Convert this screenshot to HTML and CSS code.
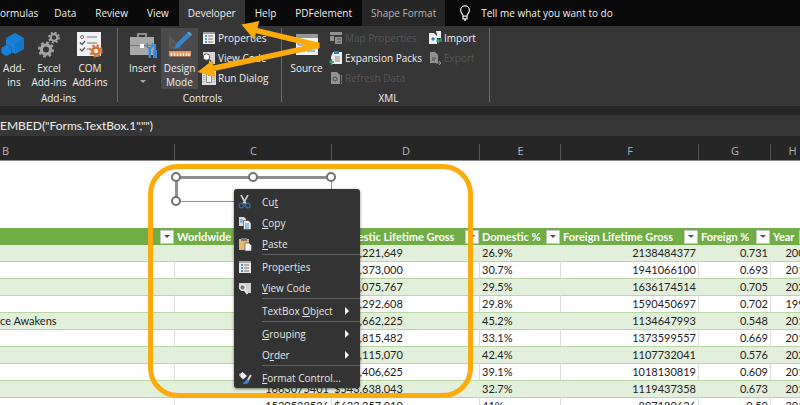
FILE: index.html
```html
<!DOCTYPE html>
<html lang="en">
  <head>
    <meta charset="UTF-8" />
    <meta name="viewport" content="width=device-width, initial-scale=1.0" />
    <title>Box office workbook</title>
    <link rel="stylesheet" href="styles.css">
  </head>
  <body>
    <!-- Ribbon tabs -->
    <nav class="tabs">
      <button class="tab tab-first">ormulas</button>
      <button class="tab">Data</button>
      <button class="tab">Review</button>
      <button class="tab">View</button>
      <button class="tab active">Developer</button>
      <button class="tab">Help</button>
      <button class="tab">PDFelement</button>
      <button class="tab context">Shape Format</button>
      <button class="tell-me">
        <svg width="12" height="16" viewBox="0 0 12 16" fill="none" stroke="#e8e8e8" stroke-width="1.3">
          <path d="M4 11.2C4 9 1.6 8.300 1.600 5.300a4.400 4.400 0 0 1 8.800 0C10.400 8.300 8 9 8 11.200zM4 11.200v2.600h4v-2.600M5 15h2" />
        </svg>
        Tell me what you want to do
      </button>
    </nav>

    <!-- Ribbon -->
    <div class="ribbon">
      <section class="group group-addins">
        <div class="group-tools">
          <button class="big">
            <svg width="26" height="26" viewBox="0 0 26 26">
              <path d="M14 1l9 5v11l-9 5-9-5V6z" fill="#1a7fd4" />
              <path d="M14 12l9-6v11l-9 5z" fill="#1276c9" />
              <path d="M5.500 13l5 2.700v5.600l-5 2.700-5-2.700v-5.600z" fill="#1683d8" stroke="#2b5f8e" stroke-width=".8" />
            </svg>
            <span>Add-<br>ins</span>
          </button>
          <button class="big">
            <svg width="26" height="26" viewBox="0 0 26 26" fill="none" stroke="#a3a3a3">
              <circle cx="10" cy="17.500" r="4.600" stroke-width="3.200" />
              <circle cx="10" cy="17.500" r="6.900" stroke-width="2.400" stroke-dasharray="2.700 2.720" />
              <circle cx="18" cy="5.500" r="3.300" stroke-width="2.200" />
              <circle cx="18" cy="5.500" r="5" stroke-width="1.800" stroke-dasharray="2 1.930" />
            </svg>
            <span>Excel<br>Add-ins</span>
          </button>
          <button class="big">
            <svg width="28" height="26" viewBox="0 0 28 26" fill="none">
              <path d="M1 0h24v24H1z" fill="#f1f1f1" />
              <circle cx="6" cy="5" r="1.500" stroke="#777" />
              <path d="M11 5h10M11 11h10M11 17h5" stroke="#777" />
              <path d="M4 10.500l2 2 3-3.500M4 17l2 2 3-3.500" stroke="#555" stroke-width="1.200" />
              <circle cx="20" cy="19" r="5.800" fill="#f1f1f1" />
              <circle cx="20" cy="19" r="3.500" stroke="#d8712c" stroke-width="2.600" />
              <circle cx="20" cy="19" r="5.600" stroke="#d8712c" stroke-width="2.200" stroke-dasharray="2.200 2.200" />
            </svg>
            <span>COM<br>Add-ins</span>
          </button>
        </div>
        <h2>Add-ins</h2>
      </section>

      <section class="group group-controls">
        <div class="group-tools">
          <button class="big">
            <svg width="28" height="26" viewBox="0 0 28 26">
              <path d="M9 6V2h8v4" fill="none" stroke="#a8a8a8" stroke-width="1.600" />
              <path d="M1 5h24v18H1z" fill="#a8a8a8" />
              <path d="M1 13.500h24" stroke="#777" />
              <path d="M11 12h4v4h-4z" fill="#fff" />
              <path d="M17.500 11v4.500l2 1.500v9h2.500v-9l2-1.500V11h-1.500v4h-3.500v-4zM25 12h2v6h1v8h-4v-8h1z" fill="#3b8ad8" />
            </svg>
            <span>Insert</span>
            <svg class="chevron" width="6" height="4" viewBox="0 0 6 4"><path d="M0 0h6L3 3z" fill="#aaa" /></svg>
          </button>
          <button class="big pressed">
            <svg width="26" height="26" viewBox="0 0 26 26">
              <path d="M2 3v14h13zM5 10l4 4H5z" fill="#5b5b5b" fill-rule="evenodd" />
              <path d="M7 17l2.500-5.500L20 1l3.500 3L13 14.500z" fill="#3583d3" />
              <path d="M20 1l1.500-1.500L25 2.500 23.500 4z" fill="#5ba5ea" />
              <path d="M2 19h22v5.500H2z" fill="#eb925e" />
              <path d="M4.500 21v3M7.500 21v3M10.500 21v3M13.500 21v3M16.500 21v3M19.500 21v3M22 21v3" stroke="#fff" stroke-width="1.300" />
            </svg>
            <span>Design<br>Mode</span>
          </button>
          <div class="small-list">
            <button class="small">
              <svg width="14" height="14" viewBox="0 0 14 14">
                <path d="M1 1h12v12H1z" fill="#f0f0f0" /><path d="M1 1h12v2H1z" fill="#9b9b9b" />
                <path d="M3 5h2M3 8h2M3 11h2" stroke="#2878c8" stroke-width="1.500" /><path d="M6 5h5M6 8h5M6 11h5" stroke="#777" />
              </svg>
              Properties
            </button>
            <button class="small">
              <svg width="14" height="14" viewBox="0 0 14 14">
                <path d="M1 1h12v12H7V8H1z" fill="#d5d5d5" />
                <circle cx="4.500" cy="6" r="3.200" fill="#fff" stroke="#555" /><path d="M7 8.500l4 4" stroke="#555" stroke-width="1.600" />
              </svg>
              View Code
            </button>
            <button class="small">
              <svg width="14" height="14" viewBox="0 0 14 14">
                <path d="M0 0h14v14H0z" fill="#dcdcdc" /><path d="M4.500 2.500h5v9h-5z" fill="#eee" stroke="#888" />
                <path d="M2 2v10M12 2v10" stroke="#888" stroke-dasharray="1 1" /><path d="M6 4h2" stroke="#444" />
              </svg>
              Run Dialog
            </button>
          </div>
        </div>
        <h2>Controls</h2>
      </section>

      <section class="group group-xml">
        <div class="group-tools">
          <button class="big">
            <svg width="24" height="26" viewBox="0 0 24 26">
              <path d="M1 2h22v21H1z" fill="#f2f2f2" /><path d="M1 2h22v4H1z" fill="#979797" />
              <path d="M3 9h7v4H3zM12 9v10h8M12 14h8" fill="none" stroke="#418ed6" />
            </svg>
            <span>Source</span>
          </button>
          <div class="small-list">
            <button class="small" disabled>
              <svg width="14" height="14" viewBox="0 0 14 14">
                <path d="M1 1h12v3H1zM1 5h4v5H1zM6 6h7v7H6z" fill="#929292" /><path d="M8 8h4M8 11h4" stroke="#4a4a4a" />
              </svg>
              Map Properties
            </button>
            <button class="small">
              <svg width="14" height="14" viewBox="0 0 14 14">
                <path d="M4 1h9v12H2V6z" fill="#eee" /><path d="M5 0v3h5V0" fill="#2b7cc9" />
                <path d="M6 6h5M6 8h5M6 10h5" stroke="#888" /><path d="M2.500 8v6M0 11h5" stroke="#2f9b68" stroke-width="1.600" />
              </svg>
              Expansion Packs
            </button>
            <button class="small" disabled>
              <svg width="14" height="14" viewBox="0 0 14 14">
                <path d="M2 1h6l3 3v9H2z" fill="#929292" /><circle cx="6" cy="8" r="2" fill="none" stroke="#4a4a4a" /><path d="M12.500 4v6M12.500 11v2" stroke="#777" />
              </svg>
              Refresh Data
            </button>
          </div>
          <div class="small-list">
            <button class="small">
              <svg width="14" height="14" viewBox="0 0 14 14">
                <path d="M1 2h5l3 3v8H1zM8 0h5v7H9V4z" fill="#eee" /><path d="M3 8l2-2 2 2-2 2z" fill="#2b7cc9" />
                <path d="M13 7v3H9M11 8l-2 2 2 2" fill="none" stroke="#34a06c" stroke-width="1.300" />
              </svg>
              Import
            </button>
            <button class="small" disabled>
              <svg width="14" height="14" viewBox="0 0 14 14">
                <path d="M2 1h5l3 3v8H2z" fill="#929292" /><path d="M4 7h4M4 9h3" stroke="#4a4a4a" /><path d="M8 12h5M11 10l2 2-2 2" fill="none" stroke="#929292" />
              </svg>
              Export
            </button>
          </div>
        </div>
        <h2>XML</h2>
      </section>
    </div>

    <!-- Formula bar -->
    <div class="formula-bar">
      <input type="text" aria-label="Formula" value='EMBED("Forms.TextBox.1","")' />
    </div>

    <!-- Worksheet -->
    <main class="sheet">
      <table class="grid">
        <colgroup>
          <col class="col-b"><col class="col-c"><col class="col-d"><col class="col-e"><col class="col-f"><col class="col-g"><col class="col-h">
        </colgroup>
        <thead>
          <tr class="letters">
            <th class="letter-b">B</th><th>C</th><th>D</th><th>E</th><th>F</th><th>G</th><th>H</th>
          </tr>
          <tr class="blank"><td colspan="7"></td></tr>
          <tr class="fields">
            <th><div class="field"><span></span><button class="filter" aria-label="Filter title"></button></div></th>
            <th><div class="field"><span>Worldwide</span></div></th>
            <th><div class="field"><span>Domestic Lifetime Gross</span><button class="filter" aria-label="Filter domestic gross"></button></div></th>
            <th><div class="field"><span>Domestic %</span><button class="filter" aria-label="Filter domestic percent"></button></div></th>
            <th><div class="field"><span>Foreign Lifetime Gross</span><button class="filter" aria-label="Filter foreign gross"></button></div></th>
            <th><div class="field"><span>Foreign %</span><button class="filter" aria-label="Filter foreign percent"></button></div></th>
            <th><div class="field"><span>Year</span><button class="filter" aria-label="Filter year"></button></div></th>
          </tr>
        </thead>
        <tbody>
          <tr><td></td><td class="num">2923706026</td><td>$785,221,649</td><td>26.9%</td><td class="num">2138484377</td><td class="num">0.731</td><td class="num">2009</td></tr>
          <tr><td></td><td class="num">2799439100</td><td>$858,373,000</td><td>30.7%</td><td class="num">1941066100</td><td class="num">0.693</td><td class="num">2019</td></tr>
          <tr><td></td><td class="num">2320250281</td><td>$684,075,767</td><td>29.5%</td><td class="num">1636174514</td><td class="num">0.705</td><td class="num">2022</td></tr>
          <tr><td></td><td class="num">2264743305</td><td>$674,292,608</td><td>29.8%</td><td class="num">1590450697</td><td class="num">0.702</td><td class="num">1997</td></tr>
          <tr><td class="title">ce Awakens</td><td class="num">2071310218</td><td>$936,662,225</td><td>45.2%</td><td class="num">1134647993</td><td class="num">0.548</td><td class="num">2015</td></tr>
          <tr><td></td><td class="num">2052415039</td><td>$678,815,482</td><td>33.1%</td><td class="num">1373599557</td><td class="num">0.669</td><td class="num">2018</td></tr>
          <tr><td></td><td class="num">1921847111</td><td>$814,115,070</td><td>42.4%</td><td class="num">1107732041</td><td class="num">0.576</td><td class="num">2021</td></tr>
          <tr><td></td><td class="num">1671537444</td><td>$653,406,625</td><td>39.1%</td><td class="num">1018130819</td><td class="num">0.609</td><td class="num">2015</td></tr>
          <tr><td></td><td class="num">1663075401</td><td>$543,638,043</td><td>32.7%</td><td class="num">1119437358</td><td class="num">0.673</td><td class="num">2019</td></tr>
          <tr><td></td><td class="num">1520538536</td><td>$623,357,910</td><td>41%</td><td class="num">897180626</td><td class="num">0.59</td><td class="num">2012</td></tr>
        </tbody>
      </table>

      <!-- Selected text box control -->
      <div class="textbox">
        <input type="text" aria-label="TextBox1" />
        <i class="handle top-left"></i>
        <i class="handle top-mid"></i>
        <i class="handle top-right"></i>
        <i class="handle bottom-left"></i>
      </div>

      <!-- Context menu -->
      <div class="menu">
        <button>
          <svg width="14" height="14" viewBox="0 0 14 14" fill="none">
            <path d="M3 0l5 9M10 0L5 9" stroke="#d0d0d0" stroke-width="1.600" /><circle cx="3.500" cy="10.500" r="2.300" stroke="#2c6aa5" stroke-width="1.400" /><circle cx="9.800" cy="10.500" r="2.300" stroke="#2c6aa5" stroke-width="1.400" />
          </svg>
          <span>Cu<u>t</u></span>
        </button>
        <button>
          <svg width="14" height="14" viewBox="0 0 14 14">
            <path d="M1 1h5l2 2v7H1z" fill="#dedede" /><path d="M5.500 4.500h5l2.500 2.500v6.500H5.500z" fill="#f2f2f2" stroke="#333" stroke-width=".6" />
            <path d="M2 4h3M2 6h3M7 8h4M7 10h4M7 12h4" stroke="#3f83c4" />
          </svg>
          <span><u>C</u>opy</span>
        </button>
        <button>
          <svg width="14" height="14" viewBox="0 0 14 14">
            <path d="M1 2h10v11H1z" fill="#e5b877" /><path d="M3 1h6v3H3z" fill="#777" /><path d="M7 6h4l2.500 2.500V14H7z" fill="#f4f4f4" stroke="#444" stroke-width=".6" />
          </svg>
          <span><u>P</u>aste</span>
        </button>
        <hr>
        <button>
          <svg width="14" height="14" viewBox="0 0 14 14">
            <path d="M1 1h12v12H1z" fill="#e8e8e8" /><path d="M1 1h12v2H1z" fill="#aaa" />
            <path d="M3 5h2M3 8h2M3 11h2" stroke="#2878c8" stroke-width="1.300" /><path d="M6 5h5M6 8h5M6 11h5" stroke="#777" />
          </svg>
          <span>Propert<u>i</u>es</span>
        </button>
        <button>
          <svg width="14" height="14" viewBox="0 0 14 14">
            <path d="M1 2h12v10H8L5 8H1z" fill="#cfcfcf" /><circle cx="4.500" cy="6.500" r="2.800" fill="#777" stroke="#f0f0f0" stroke-width="1.300" /><path d="M6.500 9l3 4" stroke="#f0f0f0" stroke-width="1.600" />
          </svg>
          <span><u>V</u>iew Code</span>
        </button>
        <hr>
        <button class="submenu"><span>TextBox <u>O</u>bject</span></button>
        <hr>
        <button class="submenu"><span><u>G</u>rouping</span></button>
        <button class="submenu"><span>O<u>r</u>der</span></button>
        <hr>
        <button>
          <svg width="14" height="14" viewBox="0 0 14 14">
            <path d="M1 4l3.500-3L9 5 5 8.500z" fill="#eee" /><path d="M2 2v3" stroke="#999" /><path d="M13 4L9.500 9.500" stroke="#d5d5d5" stroke-width="2" /><path d="M9.500 8.500c-2 0-2 3-5 3.500 2 2 6.500 1 6.500-2z" fill="#3a86d0" />
          </svg>
          <span><u>F</u>ormat Control...</span>
        </button>
      </div>
      <div class="callout"></div>
    </main>

    <!-- Arrows pointing at the Developer tab and Design Mode -->
    <svg class="arrows" width="330" height="90" viewBox="0 0 330 90">
      <path d="M252 29.500L319 45.500 208 69.500" fill="none" stroke="#fcaa0c" stroke-width="5.500" stroke-linejoin="miter" stroke-miterlimit="2" />
      <path d="M241.500 24.500L259.500 21 254 39.500zM197.500 72L212.300 60.500 215.500 77z" fill="#fcaa0c" />
    </svg>
  </body>
</html>
```
FILE: styles.css
```css
/* Global Styles */
* {
  box-sizing: border-box;
}
body {
  margin: 0;
  height: 100vh;
  display: flex;
  flex-direction: column;
  position: relative;
  overflow: hidden;
  font-family: "Open Sans", "Noto Sans", sans-serif;
  font-size: 10px;
  background: #262626;
  color: #f0f0f0;
}
button {
  margin: 0;
  padding: 0;
  border: none;
  background: none;
  color: inherit;
  font: inherit;
  white-space: nowrap;
}
svg {
  flex: none;
}

/* Ribbon tabs */
.tabs {
  display: flex;
  gap: 1px;
  height: 26px;
  background: #0a0a0a;
}
.tab {
  padding: 0 9px;
}
.tab-first {
  padding: 0 6px 0 0;
}
.tab.active {
  background: #363636;
}
.tab.context {
  background: #262626;
  color: #b5b5b5;
}
.tell-me {
  display: flex;
  align-items: center;
  gap: 10px;
  padding-left: 13px;
}

/* Ribbon */
.ribbon {
  display: flex;
  height: 80px;
  padding: 2px 0 4px;
  background: #363636;
}
.group {
  display: flex;
  flex-direction: column;
  justify-content: space-between;
  border-right: 1px solid #6a6a6a;
}
.group h2 {
  margin: 0;
  font-size: 10px;
  font-weight: 400;
  line-height: 8px;
  text-align: center;
}
.group-tools {
  display: flex;
}
.group-addins {
  width: 118px;
}
.group-addins .group-tools {
  gap: 1px;
}
.group-controls {
  width: 164px;
  padding-left: 6px;
}
.group-xml {
  width: 208px;
  padding-left: 6px;
}
.big {
  display: flex;
  flex-direction: column;
  align-items: center;
  justify-content: flex-start;
  gap: 3px;
  width: 37px;
  height: 61px;
  padding-top: 4px;
  line-height: 14px;
}
.group-addins .big {
  width: 40px;
}
.group-addins .big:first-child {
  width: 28px;
}
.big .chevron {
  margin-top: 2px;
}
.pressed {
  background: #4b4b4b;
}
.small-list {
  display: flex;
  flex-direction: column;
  padding-left: 4px;
}
.small-list + .small-list {
  padding-left: 6px;
}
.small {
  display: flex;
  align-items: center;
  gap: 2px;
  height: 20px;
}
.small:disabled {
  color: #565656;
}

/* Formula bar */
.formula-bar {
  margin-top: 9px;
  height: 21px;
  background: #363636;
}
.formula-bar input {
  width: 100%;
  height: 21px;
  padding: 0;
  border: none;
  background: none;
  color: #f0f0f0;
  font: 12px Lato, sans-serif;
}

/* Worksheet */
.sheet {
  position: relative;
  flex: 1;
  overflow: hidden;
  background: #fff;
  color: #222;
  font-family: Lato, "Open Sans", sans-serif;
  font-size: 11px;
}
.grid {
  width: 814px;
  table-layout: fixed;
  border-collapse: separate;
  border-spacing: 0;
}
.col-b { width: 175px; }
.col-c { width: 157px; }
.col-d { width: 148px; }
.col-e { width: 81px; }
.col-f { width: 138px; }
.col-g { width: 72px; }
.grid td,
.grid th {
  height: 17px;
  padding: 0 2px;
  line-height: 16px;
  text-align: left;
  white-space: nowrap;
}
.grid .letters th {
  height: 25px;
  padding: 6px 0 0;
  background: linear-gradient(#555, #555) right bottom / 1px 16px no-repeat #262626;
  border-bottom: 1px solid #8a8a8a;
  color: #b5b5b5;
  font-family: "Open Sans", "Noto Sans", sans-serif;
  font-size: 11px;
  font-weight: 400;
  text-align: center;
}
.grid .letters .letter-b {
  padding-left: 2px;
  text-align: left;
}
.grid .blank td {
  height: 67px;
}
.grid .fields th {
  padding: 0 1px 0 2px;
  background: #70ad47;
  color: #fff;
}
.field {
  display: flex;
  justify-content: space-between;
  align-items: center;
}
.filter {
  display: flex;
  align-items: center;
  justify-content: center;
  width: 14px;
  height: 14px;
  border: 1px solid #c4c9c0;
  background: #fbfbfb;
}
.filter::after {
  content: "";
  border: 3px solid transparent;
  border-top-color: #555;
  border-bottom: none;
}
.grid tbody td {
  border-right: 1px solid #dcdcdc;
  border-bottom: 1px solid #b7d7a2;
}
.grid tbody tr:nth-child(odd) td {
  border-right-color: #e2efda;
  background: #e2efda;
}
.grid .num {
  text-align: right;
}
.grid .title {
  padding-left: 0;
}

/* Text box control */
.textbox {
  position: absolute;
  left: 175px;
  top: 40px;
  width: 157px;
  height: 26px;
}
.textbox input {
  width: 100%;
  height: 100%;
  padding: 0;
  border: 3px solid #8f8f8f;
  border-width: 3px 1px 1px 3px;
  background: #fff;
}
.handle {
  position: absolute;
  width: 10px;
  height: 10px;
  border: 2px solid #6f6f6f;
  border-radius: 50%;
  background: #fff;
}
.top-left { left: -4px; top: -4px; }
.top-mid { left: 73px; top: -4px; }
.top-right { right: -4px; top: -4px; }
.bottom-left { left: -4px; bottom: -4px; }

/* Context menu */
.menu {
  position: absolute;
  left: 234px;
  top: 53px;
  width: 126px;
  padding-top: 2px;
  border-radius: 3px;
  background: #333;
  box-shadow: 0 1px 3px rgba(0, 0, 0, 0.5);
  color: #e6e6e6;
  font-family: "Open Sans", "Noto Sans", sans-serif;
  font-size: 10px;
}
.menu button {
  display: grid;
  grid-template-columns: 24px 1fr 6px;
  align-items: center;
  width: 100%;
  height: 21px;
  padding: 0 9px 0 4px;
  text-align: left;
}
.menu span {
  grid-column: 2;
}
.menu hr {
  height: 1px;
  margin: 0 0 1px 28px;
  border: none;
  background: #606060;
}
.submenu::after {
  content: "";
  grid-column: 3;
  border: 4px solid transparent;
  border-left-color: #fff;
  border-right: none;
}

/* Highlights */
.callout {
  position: absolute;
  left: 148px;
  top: 28px;
  width: 325px;
  height: 234px;
  border: 5px solid #fcaa0c;
  border-radius: 30px;
}
.arrows {
  position: absolute;
  left: 0;
  top: 0;
}
```
